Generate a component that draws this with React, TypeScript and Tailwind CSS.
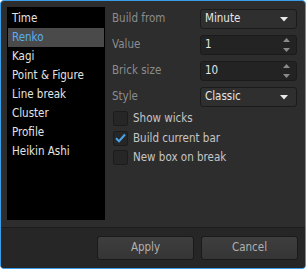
import React from "react";

const items = ["Time", "Renko", "Kagi", "Point & Figure", "Line break", "Cluster", "Profile", "Heikin Ashi"];

function Caret() {
  return (
    <svg width="8" height="5" viewBox="0 0 8 5" className="shrink-0">
      <path d="M0 0h8L4 4.5z" fill="#e8e8e8" />
    </svg>
  );
}

function Spinner() {
  return (
    <div className="flex flex-col justify-between h-[14px]">
      <svg width="7" height="4" viewBox="0 0 7 4">
        <path d="M0 4h7L3.5 0z" fill="#8a8a8a" />
      </svg>
      <svg width="7" height="4" viewBox="0 0 7 4">
        <path d="M0 0h7L3.5 4z" fill="#8a8a8a" />
      </svg>
    </div>
  );
}

function Select({ value }: { value: string }) {
  return (
    <div className="w-[97px] h-[20px] flex items-center justify-between pl-[4px] pr-[8px] rounded-[3px] border border-[#1b1b1b] bg-[#2f2f2f] text-[#e6e6e6]">
      <span>{value}</span>
      <Caret />
    </div>
  );
}

function NumberBox({ value }: { value: string }) {
  return (
    <div className="w-[97px] h-[20px] flex items-center justify-between pl-[4px] pr-[6px] rounded-[3px] border border-[#1b1b1b] bg-[#232323] text-[#e6e6e6]">
      <span>{value}</span>
      <Spinner />
    </div>
  );
}

function Check({ label, checked }: { label: string; checked?: boolean }) {
  return (
    <div className="h-[19.5px] flex items-center">
      <div className="w-[15px] h-[15px] rounded-[2px] border border-[#1c1c1c] bg-[#262626] flex items-center justify-center">
        {checked && (
          <svg width="11" height="10" viewBox="0 0 11 10">
            <path d="M1 5.2l3 3L10 1.5" stroke="#4aa3ea" strokeWidth="2" fill="none" />
          </svg>
        )}
      </div>
      <span className="ml-[5px] text-[#c6c6c6]">{label}</span>
    </div>
  );
}

export default function App() {
  const rows: [string, React.ReactNode][] = [
    ["Build from", <Select value="Minute" />],
    ["Value", <NumberBox value="1" />],
    ["Brick size", <NumberBox value="10" />],
    ["Style", <Select value="Classic" />],
  ];
  return (
    <div
      className="w-[306px] h-[269px] rounded-[4px] border border-[#3a9de8] bg-[#2d2d2d] flex flex-col overflow-hidden text-[11.5px] leading-none"
      style={{ fontFamily: "'DejaVu Sans Condensed', 'Liberation Sans', Arial, sans-serif" }}
    >
      <div className="h-[226px] flex pl-[6px] pt-[6px]">
        <div className="w-[98px] h-[213px] bg-black px-px pt-[2px]">
          {items.map((it) => (
            <div
              key={it}
              className={
                it === "Renko"
                  ? "h-[19px] flex items-center pl-[4px] bg-[#4a4a4a] text-[#5aaef0]"
                  : "h-[19px] flex items-center pl-[4px] text-[#e4e4e4]"
              }
            >
              {it}
            </div>
          ))}
        </div>
        <div className="ml-[7px] pt-[2px]">
          <div className="flex flex-col gap-[6px]">
            {rows.map(([l, c]) => (
              <div key={l} className="flex items-center h-[20px]">
                <span className="w-[88px] text-[#8c8c8c]">{l}</span>
                {c}
              </div>
            ))}
          </div>
          <div className="mt-[2px] pl-px">
            <Check label="Show wicks" />
            <Check label="Build current bar" checked />
            <Check label="New box on break" />
          </div>
        </div>
      </div>
      <div className="flex-1 border-t border-[#1c1c1c] bg-[#262626] flex justify-end items-start gap-[7px] pt-[8px] pr-[7px]">
        <button className="w-[97px] h-[24px] rounded-[3px] border border-[#1a1a1a] bg-gradient-to-b from-[#3e3e3e] to-[#353535] text-[#b0b0b0]">Apply</button>
        <button className="w-[97px] h-[24px] rounded-[3px] border border-[#1a1a1a] bg-gradient-to-b from-[#3e3e3e] to-[#353535] text-[#b0b0b0]">Cancel</button>
      </div>
    </div>
  );
}
